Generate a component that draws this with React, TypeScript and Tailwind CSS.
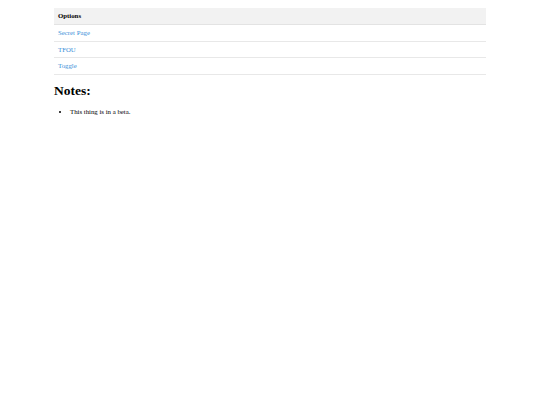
export default function App() {
  const options = ["Secret Page", "TFOU", "Toggle"];

  return (
    <div className="min-h-[405px] bg-white font-['Liberation_Serif',serif] text-[6.8px] text-black">
      <div className="mx-[54px] pt-[8px]">
        {/* Options table */}
        <div className="w-full">
          <div className="flex h-[17px] items-center border-b border-[#e3e3e3] bg-[#f2f2f2] px-[4px] pt-[1px] font-bold">
            Options
          </div>
          {options.map((opt) => (
            <div
              key={opt}
              className="flex h-[16.5px] items-center border-b border-[#e8e8e8] px-[4px] pt-[1px]"
            >
              <a className="text-[#3a8fd8]">{opt}</a>
            </div>
          ))}
        </div>

        {/* Notes */}
        <h1 className="mt-[7px] text-[13.5px] font-bold leading-[18px]">Notes:</h1>
        <ul className="mt-[7px] list-disc pl-[16px] leading-[9px]">
          <li>This thing is in a beta.</li>
        </ul>
      </div>
    </div>
  );
}
